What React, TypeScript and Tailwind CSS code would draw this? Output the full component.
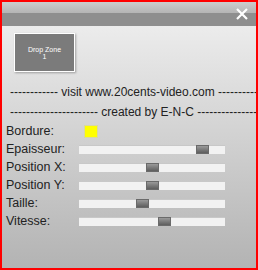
const sliders = [
  { label: "Epaisseur:", pos: 117 },
  { label: "Position X:", pos: 67 },
  { label: "Position Y:", pos: 67 },
  { label: "Taille:", pos: 57 },
  { label: "Vitesse:", pos: 79 },
];

const Slider = ({ pos }: { pos: number }) => (
  <div className="relative w-[146px] h-[9px] bg-[#f2f2f2] border-t border-[#c8c8c8]">
    <div
      className="absolute top-[-1px] w-[13px] h-[9px] bg-gradient-to-b from-[#9a9a9a] to-[#5e5e5e] border border-[#6a6a6a]"
      style={{ left: pos }}
    />
  </div>
);

const App = () => {
  return (
    <div className="w-[258px] h-[270px] border-2 border-[#ff0000] flex flex-col font-['Liberation_Sans',Arial,sans-serif] overflow-hidden">
      <div className="h-[24px] flex flex-col relative shrink-0">
        <div className="h-[11px] bg-gradient-to-b from-[#cdcdcd] to-[#b4b4b4]" />
        <div className="flex-1 bg-[#8e8e8e]" />
        <svg className="absolute right-[8px] top-[6px]" width="12" height="12" viewBox="0 0 12 12">
          <path d="M1 1L11 11M11 1L1 11" stroke="#ffffff" strokeWidth="2.2" />
        </svg>
      </div>
      <div className="flex-1 bg-gradient-to-b from-[#ececec] to-[#b3b3b3] flex flex-col pt-[7px]">
        <div className="ml-[12px] w-[61px] h-[39px] bg-[#7b7b7b] border border-white shadow-[1px_1px_2px_rgba(0,0,0,0.3)] flex flex-col items-center justify-center text-white text-[7px] leading-[7px]">
          <span>Drop Zone</span>
          <span>1</span>
        </div>
        <div className="mt-[10px] pl-[8px] whitespace-nowrap overflow-hidden text-[12px] leading-[20px] text-[#222]">
          ------------ visit www.20cents-video.com ------------------
        </div>
        <div className="pl-[8px] whitespace-nowrap overflow-hidden text-[12px] leading-[20px] text-[#222]">
          ---------------------- created by E-N-C ------------------------
        </div>
        <div className="flex flex-col pl-[4px] text-[12.5px] text-[#222]">
          <div className="flex items-center h-[17px] mt-[1px]">
            <span className="w-[76px]">Bordure:</span>
            <div className="ml-[2px] w-[14px] h-[13px] bg-[#ffff00] border border-[#d8d8a0]" />
          </div>
          {sliders.map((s) => (
            <div key={s.label} className="flex items-center h-[18px]">
              <span className="w-[73px]">{s.label}</span>
              <Slider pos={s.pos} />
            </div>
          ))}
        </div>
      </div>
    </div>
  );
};

export default App;
